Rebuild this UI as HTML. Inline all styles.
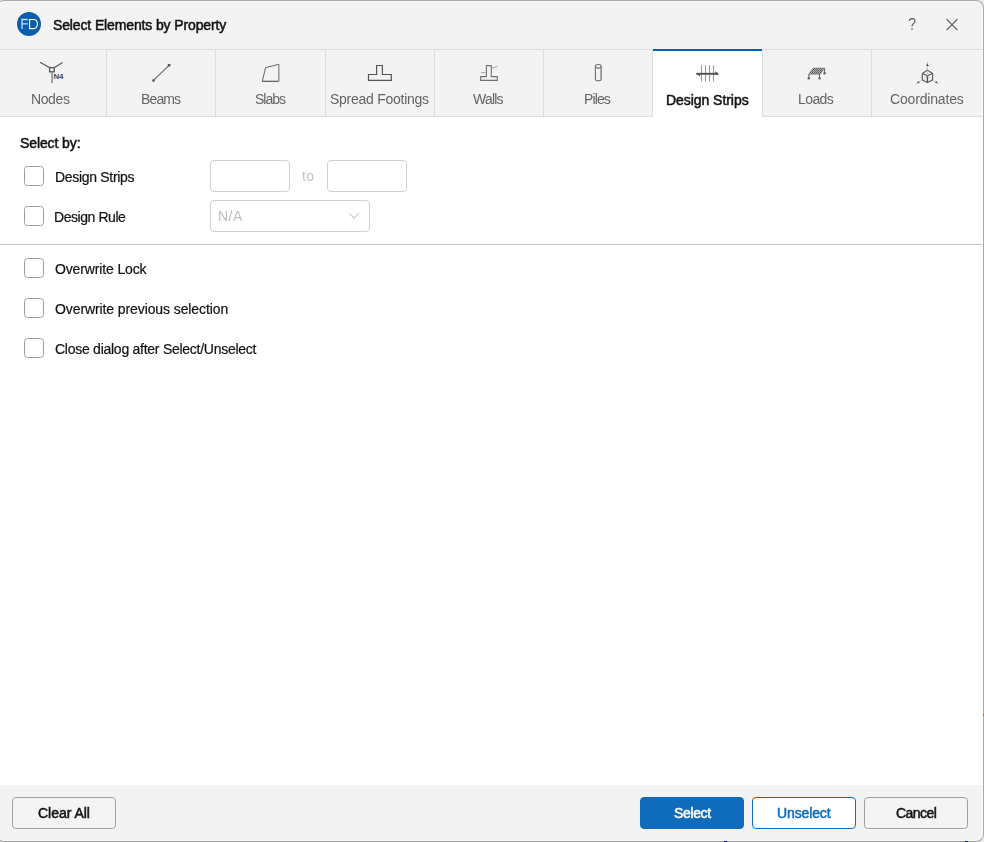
<!DOCTYPE html>
<html><head><meta charset="utf-8">
<style>
html,body{margin:0;padding:0;width:984px;height:842px;overflow:hidden;background:#fff;}
body{position:relative;font-family:"Liberation Sans",sans-serif;font-size:14px;color:#1a1a1a;}
.a{position:absolute;}
.t{position:absolute;white-space:nowrap;line-height:14px;z-index:5;will-change:transform;}
.r{-webkit-text-stroke:0.2px currentColor;}
.s{-webkit-text-stroke:0.5px currentColor;}
#titlebar{left:0;top:0;width:984px;height:49px;background:#f3f3f3;}
#tabs{left:0;top:49px;width:984px;height:68px;background:#f3f3f3;}
.vl{position:absolute;width:1px;background:#dcdcdc;}
.hl{position:absolute;height:1px;background:#dcdcdc;}
#content{left:0;top:117px;width:984px;height:668px;background:#fff;}
#footer{left:0;top:785px;width:984px;height:57px;background:#f3f3f3;}
.cb{position:absolute;left:24px;width:18px;height:18px;border:1px solid #9c9ea4;border-radius:3.5px;background:#fff;}
.inp{position:absolute;border:1px solid #d1d1d1;border-radius:4px;background:#fff;}
.btn{position:absolute;top:797px;width:102px;height:30px;border:1px solid #a0a1a6;border-radius:4px;background:#f4f4f4;}
.tab{color:#5c5c5c;}
</style></head>
<body>
<div class="a" id="titlebar"></div>
<div class="a" id="tabs"></div>
<div class="a" id="content"></div>
<div class="a" id="footer"></div>

<!-- tab lines -->
<div class="hl" style="left:0;top:49px;width:653px;"></div>
<div class="hl" style="left:762px;top:49px;width:222px;"></div>
<div class="hl" style="left:0;top:116px;width:653px;"></div>
<div class="hl" style="left:762px;top:116px;width:222px;"></div>
<div class="vl" style="left:106px;top:49px;height:68px;"></div>
<div class="vl" style="left:215px;top:49px;height:68px;"></div>
<div class="vl" style="left:325px;top:49px;height:68px;"></div>
<div class="vl" style="left:434px;top:49px;height:68px;"></div>
<div class="vl" style="left:543px;top:49px;height:68px;"></div>
<div class="vl" style="left:652px;top:49px;height:68px;"></div>
<div class="vl" style="left:762px;top:49px;height:68px;"></div>
<div class="vl" style="left:871px;top:49px;height:68px;"></div>
<!-- active tab -->
<div class="a" style="left:653px;top:49px;width:109px;height:68px;background:#fff;"></div>
<div class="a" style="left:653px;top:49px;width:109px;height:2px;background:#005fb8;"></div>

<!-- separator -->
<div class="a" style="left:0;top:244px;width:984px;height:1px;background:#c4c4c4;"></div>

<!-- title -->
<div class="a" style="left:17px;top:12px;width:24px;height:24px;border-radius:50%;background:#0a5eac;"></div>
<div class="t s" style="left:53.46px;top:18px;color:#111111;letter-spacing:-0.130px;">Select Elements by Property</div>
<div class="t" style="left:31.44px;top:92px;color:#646464;letter-spacing:-0.386px;">Nodes</div>
<div class="t" style="left:140.72px;top:92px;color:#646464;letter-spacing:-0.867px;">Beams</div>
<div class="t" style="left:254.89px;top:92px;color:#646464;letter-spacing:-1.017px;">Slabs</div>
<div class="t" style="left:329.89px;top:92px;color:#646464;letter-spacing:-0.260px;">Spread Footings</div>
<div class="t" style="left:472.96px;top:92px;color:#646464;letter-spacing:-0.795px;">Walls</div>
<div class="t" style="left:583.98px;top:92px;color:#646464;letter-spacing:-0.870px;">Piles</div>
<div class="t s" style="left:665.59px;top:93px;color:#111111;letter-spacing:-0.051px;">Design Strips</div>
<div class="t" style="left:798.44px;top:92px;color:#646464;letter-spacing:-0.591px;">Loads</div>
<div class="t" style="left:890.05px;top:92px;color:#646464;letter-spacing:-0.170px;">Coordinates</div>
<div class="t s" style="left:20.20px;top:136px;color:#111111;letter-spacing:-0.101px;">Select by:</div>
<div class="t r" style="left:55.48px;top:170px;color:#111111;letter-spacing:-0.311px;">Design Strips</div>
<div class="t r" style="left:54.44px;top:210px;color:#111111;letter-spacing:-0.441px;">Design Rule</div>
<div class="t r" style="left:55.08px;top:262px;color:#111111;letter-spacing:-0.137px;">Overwrite Lock</div>
<div class="t r" style="left:55.08px;top:302px;color:#111111;letter-spacing:-0.098px;">Overwrite previous selection</div>
<div class="t r" style="left:55.02px;top:342px;color:#111111;letter-spacing:-0.261px;">Close dialog after Select/Unselect</div>
<div class="t" style="left:302.48px;top:169px;color:#c4c4c4;letter-spacing:0.390px;">to</div>
<div class="t" style="left:217.70px;top:209px;color:#bdbdbd;letter-spacing:0.470px;">N/A</div>
<div class="t s" style="left:38.20px;top:806px;color:#111111;letter-spacing:-0.027px;">Clear All</div>
<div class="t s" style="left:673.74px;top:806px;color:#ffffff;letter-spacing:-0.359px;">Select</div>
<div class="t s" style="left:777.27px;top:806px;color:#0f6cbd;letter-spacing:-0.122px;">Unselect</div>
<div class="t s" style="left:895.74px;top:806px;color:#111111;letter-spacing:-0.538px;">Cancel</div>

<!-- tab labels -->

<!-- content -->
<div class="cb" style="top:166px;"></div>
<div class="inp" style="left:210px;top:160px;width:78px;height:30px;"></div>
<div class="inp" style="left:327px;top:160px;width:78px;height:30px;"></div>
<div class="cb" style="top:206px;"></div>
<div class="inp" style="left:210px;top:200px;width:158px;height:30px;"></div>

<div class="cb" style="top:258px;"></div>
<div class="cb" style="top:298px;"></div>
<div class="cb" style="top:338px;"></div>

<!-- buttons -->
<div class="btn" style="left:12px;"></div>
<div class="btn" style="left:640px;background:#0f6cbd;border-color:#0f6cbd;"></div>
<div class="btn" style="left:752px;background:#fff;border-color:#0f6cbd;"></div>
<div class="btn" style="left:864px;"></div>

<!-- window border -->
<div class="a" style="left:-4px;top:0;width:988px;height:842px;box-sizing:border-box;border:1px solid #a9a9a9;border-bottom-color:#9c9c9c;border-radius:8px;box-shadow:0 0 0 30px #ececec, inset 0 0 0 1px rgba(255,255,255,0.55);z-index:10;"></div>

<svg class="a" style="left:0;top:0" width="984" height="842" viewBox="0 0 984 842">
<!-- FD logo -->
<g fill="none" stroke="#fff">
<path d="M22,29 V19.5 H27.8 M22,23.9 H27.8" stroke-width="1.3" stroke-opacity="0.8"/>
<path d="M29.6,28.6 V19.5 H33.5 C36,19.5 37.4,21.5 37.4,24 C37.4,26.6 36,28.6 33.5,28.6 Z" stroke-width="1.1"/>
</g>
<!-- help & close -->
<path d="M909.3,21 C909.5,19.3 910.7,18.6 912.1,18.6 C913.8,18.6 915,19.7 915,21.1 C915,22.6 914,23.2 913.1,24 C912.4,24.6 912,25.3 912,26.5" fill="none" stroke="#5c5c5c" stroke-width="1.1"/>
<rect x="911.3" y="28.4" width="1.5" height="1.4" fill="#5c5c5c"/>
<path d="M946.5,19.2 L957.5,30.2 M957.5,19.2 L946.5,30.2" stroke="#5c5c5c" stroke-width="1.2"/>
<!-- Nodes -->
<g fill="none" stroke="#555" stroke-width="1.2">
<path d="M40,62.3 L49.5,67.6 M62.6,62.4 L54.5,67.6"/>
<rect x="49.6" y="67.6" width="4.6" height="4.2" stroke-width="1.3"/>
</g>
<path d="M52.1,72 V83" stroke="#8a8a8a" stroke-width="1.5"/>
<text x="53.5" y="79" font-family="Liberation Sans" font-weight="700" font-size="7.9" fill="#4a4a4a" letter-spacing="-0.25">N4</text>
<!-- Beams -->
<path d="M153.5,80.3 L169,65.3" stroke="#666" stroke-width="1.1"/>
<rect x="152.3" y="79.3" width="2.4" height="2.4" fill="#555"/>
<rect x="167.8" y="64" width="2.6" height="2.4" fill="#555"/>
<!-- Slabs -->
<path d="M262.3,81.3 L265.6,67.6 L278.8,64.3" fill="none" stroke="#666" stroke-width="1"/>
<path d="M262.3,81.3 H278.8" stroke="#555" stroke-width="1.2"/>
<path d="M278.8,64.3 V81.3" stroke="#999" stroke-width="1.6"/>
<!-- Spread footings -->
<path d="M368.5,80.3 V74.5 H376.6 V65.5 H382.4 V74.5 H391.3 V80.3 Z" fill="none" stroke="#555" stroke-width="1.2"/>
<!-- Walls -->
<path d="M480.7,80.4 V76.6 H486.4 V65.6 H491.3 V76.6 H497.3 V80.4 Z" fill="none" stroke="#707070" stroke-width="1.1"/>
<path d="M481,72.5 H486.3" stroke="#999" stroke-width="0.8"/>
<path d="M491.5,68.3 L497.5,66.3" stroke="#999" stroke-width="0.8"/>
<!-- Piles -->
<g fill="none" stroke="#707070" stroke-width="1.1">
<path d="M595.4,66.3 V79 C595.4,80.2 596.8,80.8 598.3,80.8 C599.8,80.8 601.2,80.2 601.2,79 V66.3"/>
<ellipse cx="598.3" cy="66.3" rx="2.9" ry="1.8"/>
</g>
<path d="M600.6,68 V79.5" stroke="#aaa" stroke-width="0.9"/>
<!-- Design strips -->
<g stroke="#9a9a9a" stroke-width="1.1">
<path d="M701.5,65.3 V81.5 M705.5,65.3 V81.5 M709.5,65.3 V81.5 M713.5,65.3 V81.5"/>
</g>
<path d="M696.5,73.8 H718" stroke="#505050" stroke-width="1.9"/>
<path d="M695.6,72.9 L699.9,76.4 L699.9,73.2 Z" fill="#505050"/>
<path d="M715.2,71.2 L719.3,74.6 L715.2,74.6 Z" fill="#4f4f4f"/>
<!-- Loads -->
<defs><pattern id="chk" width="2" height="2" patternUnits="userSpaceOnUse"><rect width="2" height="2" fill="#b4b4b4"/><rect width="1" height="1" fill="#555"/><rect x="1" y="1" width="1" height="1" fill="#6a6a6a"/></pattern></defs>
<path d="M813.1,68.1 H824.8 L820.2,74.2 H808.8 Z" fill="url(#chk)"/>
<path d="M813.1,68.1 H824.8 L820.2,74.2 H808.8 Z" fill="none" stroke="#707070" stroke-width="0.6"/>
<g stroke="#666" stroke-width="1">
<path d="M808.8,74 V78.5 M819.5,74 V78.5 M824.6,68.3 V73.4"/>
</g>
<g fill="#555">
<rect x="807.6" y="77.5" width="2.4" height="1.8"/>
<rect x="818.3" y="77.5" width="2.4" height="1.8"/>
<rect x="823.4" y="72.5" width="2.4" height="1.8"/>
</g>
<!-- Coordinates -->
<g fill="none" stroke="#555" stroke-width="1.1" stroke-linejoin="round">
<path d="M927.4,70.1 L922.3,73.5 V80.1 L927.4,82.6 L932.6,80.1 V73.5 Z"/>
<path d="M922.3,73.5 L927.4,75.8 L932.6,73.5"/>
</g>
<path d="M927.4,75.8 V82.6" stroke="#555" stroke-width="1.4"/>
<path d="M927.4,75.8 V70.5 M927.4,75.8 L923,79.5 M927.4,75.8 L931.8,79.5" stroke="#aaa" stroke-width="0.6"/>
<g stroke="#aaa" stroke-width="0.7">
<path d="M927.4,62 V70 M921.6,80.5 L915.8,84 M933.2,80.5 L939,84"/>
</g>
<g fill="#555">
<path d="M925.9,66 L927.4,63.6 L928.9,66 Z"/>
<path d="M917,83.2 L918.4,81 L919.8,82.8 Z"/>
<path d="M937.8,83.2 L936.4,81 L935,82.8 Z"/>
</g>
<!-- dropdown chevron -->
<path d="M349.2,213.3 L354,218.1 L358.8,213.3" fill="none" stroke="#c4c4c4" stroke-width="1.1"/>
</svg>
<div class="a" style="left:983px;top:714px;width:1px;height:2px;background:#b8651a;z-index:11;"></div>
<div class="a" style="left:724px;top:841px;width:3px;height:1px;background:#10109a;z-index:11;"></div>
<div class="a" style="left:965px;top:841px;width:3px;height:1px;background:#10109a;z-index:11;"></div>
</body></html>
